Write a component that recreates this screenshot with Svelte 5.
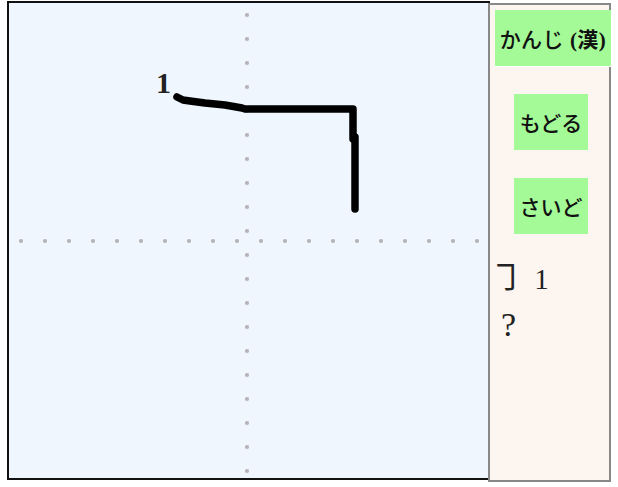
<script>
  const dots = Array.from({ length: 20 }, (_, i) => 12 + i * 24);
  const strokeTop = "168,94 174,97 181,98 196,100 216,102 233,105 236,106 344,106 344,136";
  const strokeDown = "346,134 346,206";
</script>

<div class="page">
  <div class="canvas">
    <svg width="479" height="475" viewBox="0 0 479 475">
      {#each dots as d}
        <circle cx="238" cy={d} r="2.1" />
        <circle cx={d} cy="238" r="2.1" />
      {/each}
      <polyline points={strokeTop} />
      <polyline points={strokeDown} />
      <text x="147" y="90">1</text>
    </svg>
  </div>

  <div class="side">
    <button class="wide">かんじ <b>(漢)</b></button>
    <button>もどる</button>
    <button>さいど</button>
    <div class="answer"><span class="mark">㇆</span> 1</div>
    <div class="answer big">?</div>
  </div>
</div>

<style>
  :global(body) {
    margin: 0;
    background: #fff;
  }

  .page {
    display: flex;
    align-items: flex-start;
    padding: 1px 0 0 7px;
    font-family: "Liberation Serif", "Noto Sans CJK JP", serif;
  }

  .canvas {
    width: 479px;
    height: 475px;
    border: 2px solid #111;
    background: #eff6fe;
  }

  svg {
    display: block;
  }

  circle {
    fill: #b4b4b8;
  }

  polyline {
    fill: none;
    stroke: #000;
    stroke-width: 7.5;
    stroke-linecap: round;
    stroke-linejoin: round;
  }

  text {
    font-size: 30px;
    font-weight: bold;
    fill: #222;
  }

  .side {
    width: 119px;
    height: 475px;
    margin: 2px 0 0 -2px;
    border: 2px solid #888;
    background: #fdf5f0;
    display: flex;
    flex-direction: column;
    align-items: flex-start;
    position: relative;
  }

  button {
    width: 74px;
    height: 56px;
    margin: 28px 0 0 24px;
    padding: 0;
    border: 0;
    background: #a3fa96;
    color: #111;
    font: 500 21px "Liberation Serif", "Noto Sans CJK JP", serif;
  }

  .wide {
    width: 116px;
    margin: 5px -2px 0 5px;
    box-shadow: 0 1px 0 #fff;
    letter-spacing: 0.5px;
    white-space: nowrap;
    position: relative;
  }

  .answer {
    margin-left: 8px;
    font-size: 29px;
    line-height: 46px;
    color: #222;
  }

  .mark {
    font-size: 33px;
    margin: 0 4px 0 -8px;
    line-height: 1;
  }

  .big {
    font-size: 34px;
    margin-left: 11px;
  }

  button + .answer {
    margin-top: 22px;
  }
</style>
